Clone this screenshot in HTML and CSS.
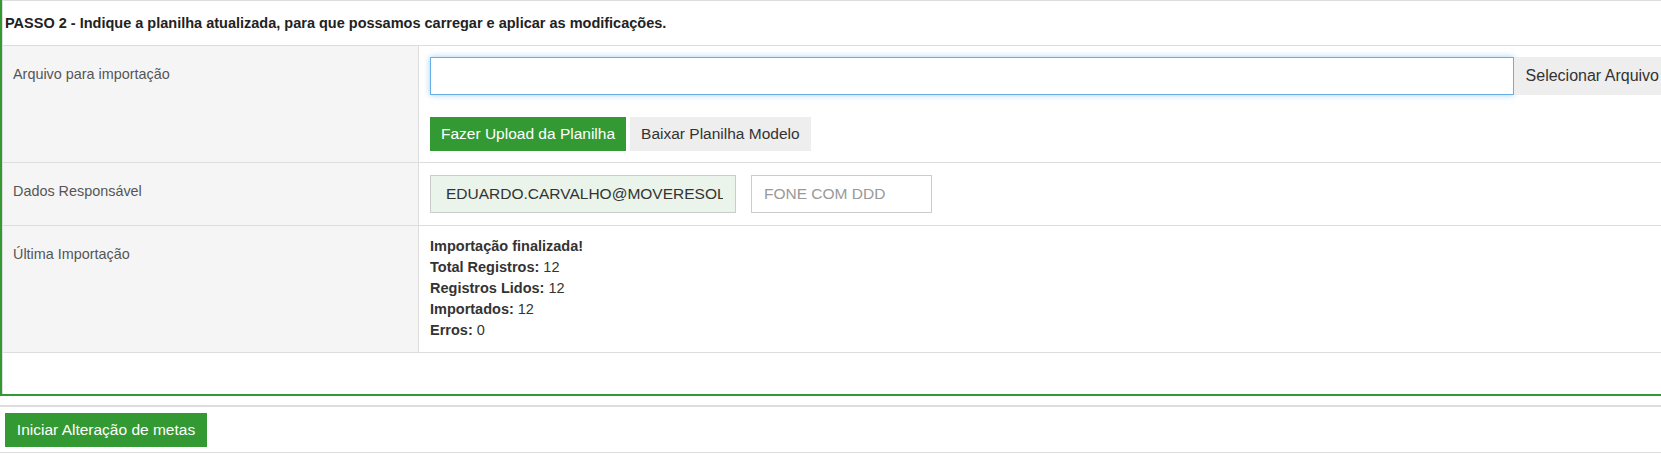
FILE: index.html
```html
<!DOCTYPE html>
<html lang="pt-BR">
<head>
<meta charset="utf-8">
<title>Importação de metas</title>
<link rel="stylesheet" href="styles.css">
</head>
<body>
<div class="panel">
  <div class="panel-inner">
    <div class="panel-title">PASSO 2 - Indique a planilha atualizada, para que possamos carregar e aplicar as modificações.</div>
    <div class="row row-file">
      <div class="label">Arquivo para importação</div>
      <div class="field">
        <div class="file-group">
          <input class="text-input focused" type="text">
          <span class="file-btn">Selecionar Arquivo</span>
        </div>
        <div class="actions">
          <button class="btn btn-green" type="button">Fazer Upload da Planilha</button>
          <button class="btn btn-gray" type="button">Baixar Planilha Modelo</button>
        </div>
      </div>
    </div>
    <div class="row row-resp">
      <div class="label">Dados Responsável</div>
      <div class="field field-inline">
        <input class="text-input email" type="text" value="EDUARDO.CARVALHO@MOVERESOLUCOES.COM.BR">
        <input class="text-input phone" type="text" placeholder="FONE COM DDD">
      </div>
    </div>
    <div class="row row-last">
      <div class="label">Última Importação</div>
      <div class="field status">
        <div><b>Importação finalizada!</b></div>
        <div><b>Total Registros:</b> 12</div>
        <div><b>Registros Lidos:</b> 12</div>
        <div><b>Importados:</b> 12</div>
        <div><b>Erros:</b> 0</div>
      </div>
    </div>
    <div class="panel-spacer"></div>
  </div>
</div>
<div class="footer-bar">
  <button class="btn btn-green btn-start" type="button">Iniciar Alteração de metas</button>
</div>
</body>
</html>
```

FILE: styles.css
```css
html, body {
  margin: 0;
  padding: 0;
  overflow: hidden;
  background: #fff;
}
body {
  font-family: "Liberation Sans", Arial, sans-serif;
  color: #333;
  width: 1661px;
}
.panel {
  width: 1680px;
  border-left: 2px solid #339933;
  border-bottom: 2px solid #339933;
}
.panel-inner {
  border-top: 1px solid #ddd;
  border-left: 1px solid #ddd;
}
.panel-title {
  height: 44px;
  line-height: 44px;
  font-size: 14.5px;
  font-weight: bold;
  color: #222;
  padding-left: 2px;
  border-bottom: 1px solid #ddd;
}
.row {
  display: flex;
  border-bottom: 1px solid #ddd;
}
.label {
  width: 405px;
  flex: none;
  background: #f5f5f5;
  border-right: 1px solid #ddd;
  padding: 18px 0 0 10px;
  font-size: 14.4px;
  line-height: 20px;
  color: #555;
}
.field {
  flex: 1;
  padding: 11px 11px 11px 11px;
}
.row-resp .field {
  padding: 12px 11px 12px 11px;
}
.file-group {
  display: flex;
  height: 38px;
}
.text-input {
  box-sizing: border-box;
  height: 38px;
  margin: 0;
  border: 1px solid #ccc;
  border-radius: 0;
  padding: 0 12px;
  font-family: "Liberation Sans", Arial, sans-serif;
  font-size: 15.5px;
  color: #333;
  background: #fff;
  outline: none;
}
.file-group .text-input {
  flex: 1;
}
.text-input.focused {
  border-color: #66afe9;
  box-shadow: 0 0 6px rgba(102, 175, 233, 0.6);
}
.file-btn {
  flex: none;
  background: #eee;
  padding: 0 12px;
  line-height: 38px;
  font-size: 16px;
  color: #333;
}
.actions {
  display: flex;
  gap: 4px;
  margin-top: 22px;
}
.btn {
  height: 34px;
  margin: 0;
  border: none;
  border-radius: 0;
  padding: 0 11px;
  font-family: "Liberation Sans", Arial, sans-serif;
  font-size: 15.5px;
}
.btn-green {
  background: #339933;
  color: #fff;
}
.btn-gray {
  background: #eee;
  color: #333;
}
.field-inline {
  display: flex;
  gap: 15px;
}
.email {
  width: 306px;
  background: #eaf4ea;
  padding-left: 15px;
}
.phone {
  width: 181px;
}
.phone::placeholder {
  color: #999;
}
.status {
  padding: 10px 11px 11px 11px;
  font-size: 14.5px;
  line-height: 21px;
}
.status b {
  color: #333;
}
.panel-spacer {
  height: 41px;
}
.footer-bar {
  margin-top: 9px;
  border-top: 2px solid #ddd;
  border-bottom: 1px solid #ddd;
  padding: 6px 0 5px 5px;
}
.btn-start {
  display: block;
  width: 202px;
  padding: 0;
}
```
